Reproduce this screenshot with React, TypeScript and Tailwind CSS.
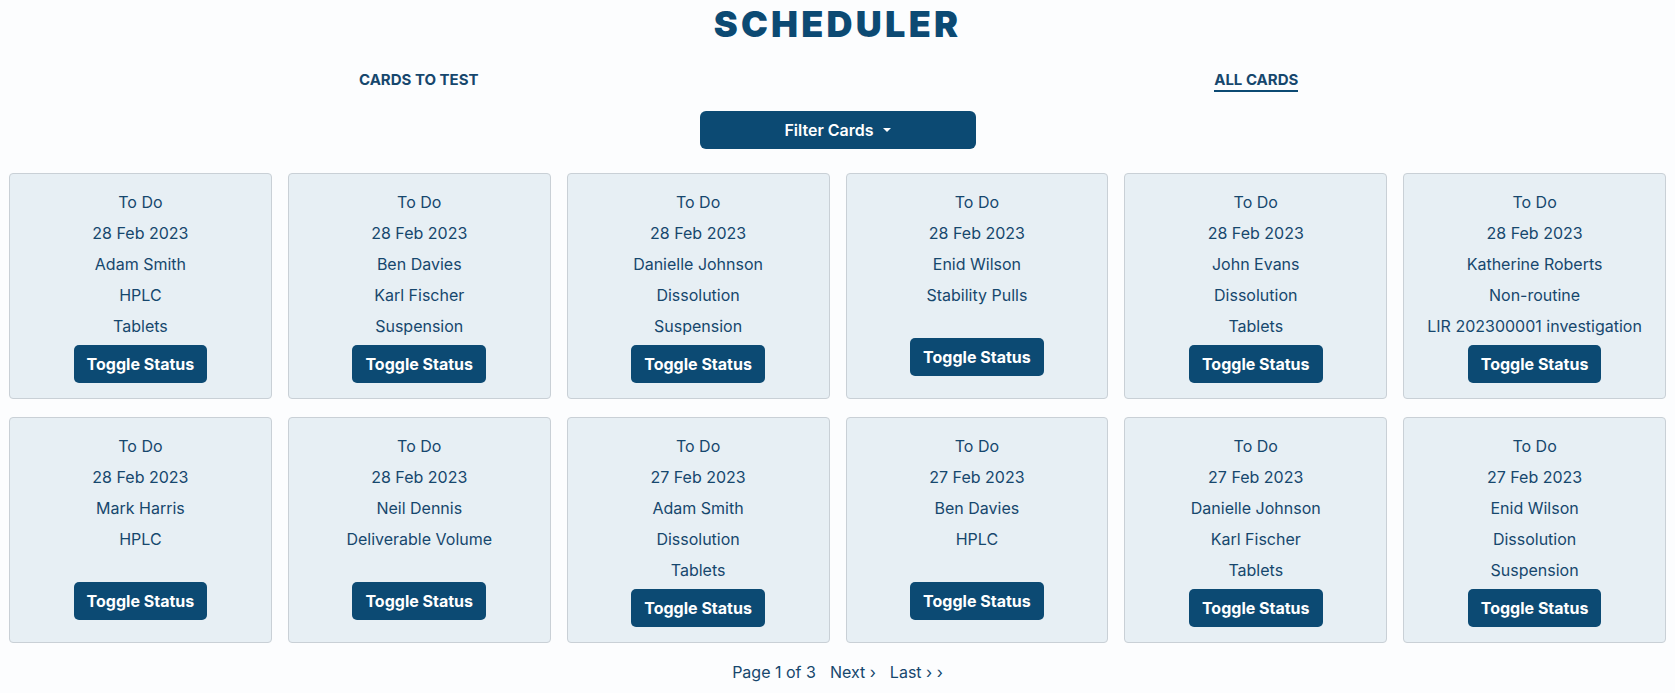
import { useState } from "react";

type Card = { status: string; date: string; analyst: string; test: string; detail?: string };

const cards: Card[] = [
  { status: "To Do", date: "28 Feb 2023", analyst: "Adam Smith", test: "HPLC", detail: "Tablets" },
  { status: "To Do", date: "28 Feb 2023", analyst: "Ben Davies", test: "Karl Fischer", detail: "Suspension" },
  { status: "To Do", date: "28 Feb 2023", analyst: "Danielle Johnson", test: "Dissolution", detail: "Suspension" },
  { status: "To Do", date: "28 Feb 2023", analyst: "Enid Wilson", test: "Stability Pulls" },
  { status: "To Do", date: "28 Feb 2023", analyst: "John Evans", test: "Dissolution", detail: "Tablets" },
  { status: "To Do", date: "28 Feb 2023", analyst: "Katherine Roberts", test: "Non-routine", detail: "LIR 202300001 investigation" },
  { status: "To Do", date: "28 Feb 2023", analyst: "Mark Harris", test: "HPLC" },
  { status: "To Do", date: "28 Feb 2023", analyst: "Neil Dennis", test: "Deliverable Volume" },
  { status: "To Do", date: "27 Feb 2023", analyst: "Adam Smith", test: "Dissolution", detail: "Tablets" },
  { status: "To Do", date: "27 Feb 2023", analyst: "Ben Davies", test: "HPLC" },
  { status: "To Do", date: "27 Feb 2023", analyst: "Danielle Johnson", test: "Karl Fischer", detail: "Tablets" },
  { status: "To Do", date: "27 Feb 2023", analyst: "Enid Wilson", test: "Dissolution", detail: "Suspension" },
];

function ScheduleCard({ card }: { card: Card }) {
  const [done, setDone] = useState(false);
  return (
    <div className="rounded-[4px] border border-[#c9d0d6] bg-[#e7eff4] pt-[13px] pb-[15px] text-center">
      <p className="leading-[31px]">{done ? "Done" : card.status}</p>
      <p className="leading-[31px]">{card.date}</p>
      <p className="leading-[31px]">{card.analyst}</p>
      <p className="leading-[31px]">{card.test}</p>
      {card.detail ? <p className="leading-[31px]">{card.detail}</p> : <div className="h-[24px]" />}
      <button
        type="button"
        onClick={() => setDone(!done)}
        className="mt-[3px] h-[38px] rounded-[5px] bg-[#0c4a73] px-[13px] text-[16px] font-bold text-white"
      >
        Toggle Status
      </button>
    </div>
  );
}

export default function App() {
  const [tab, setTab] = useState<"test" | "all">("all");

  return (
    <div className="min-h-screen bg-[#fcfdfe] font-['Inter',sans-serif] text-[16px] text-[#16476d]">
      <h1 className="pt-[1px] text-center text-[36px] leading-[46px] font-black tracking-[0.09em] text-[#0c4a73]">
        SCHEDULER
      </h1>

      <nav className="mt-[23px] flex">
        <div className="flex flex-1 justify-center">
          <button
            onClick={() => setTab("test")}
            className={
              tab === "test"
                ? "border-b-2 border-[#0c4a73] text-[15px] leading-[20px] font-bold"
                : "border-b-2 border-transparent text-[15px] leading-[20px] font-bold"
            }
          >
            CARDS TO TEST
          </button>
        </div>
        <div className="flex flex-1 justify-center">
          <button
            onClick={() => setTab("all")}
            className={
              tab === "all"
                ? "border-b-2 border-[#0c4a73] text-[15px] leading-[20px] font-bold"
                : "border-b-2 border-transparent text-[15px] leading-[20px] font-bold"
            }
          >
            ALL CARDS
          </button>
        </div>
      </nav>

      <div className="mt-[19px] flex justify-center">
        <button
          type="button"
          className="flex h-[38px] w-[276px] items-center justify-center gap-[9px] rounded-[6px] bg-[#0c4a73] text-[16px] font-semibold text-white"
        >
          Filter Cards
          <span className="h-0 w-0 border-x-[4px] border-t-[4px] border-x-transparent border-t-white" />
        </button>
      </div>

      <div className="mt-[24px] grid grid-cols-6 gap-x-4 gap-y-[18px] px-[9px]">
        {cards.map((c, i) => (
          <ScheduleCard key={i} card={c} />
        ))}
      </div>

      <div className="mt-[17px] flex justify-center gap-[14px] leading-[24px]">
        <span>Page 1 of 3</span>
        <button type="button">Next ›</button>
        <button type="button">Last › ›</button>
      </div>
    </div>
  );
}
